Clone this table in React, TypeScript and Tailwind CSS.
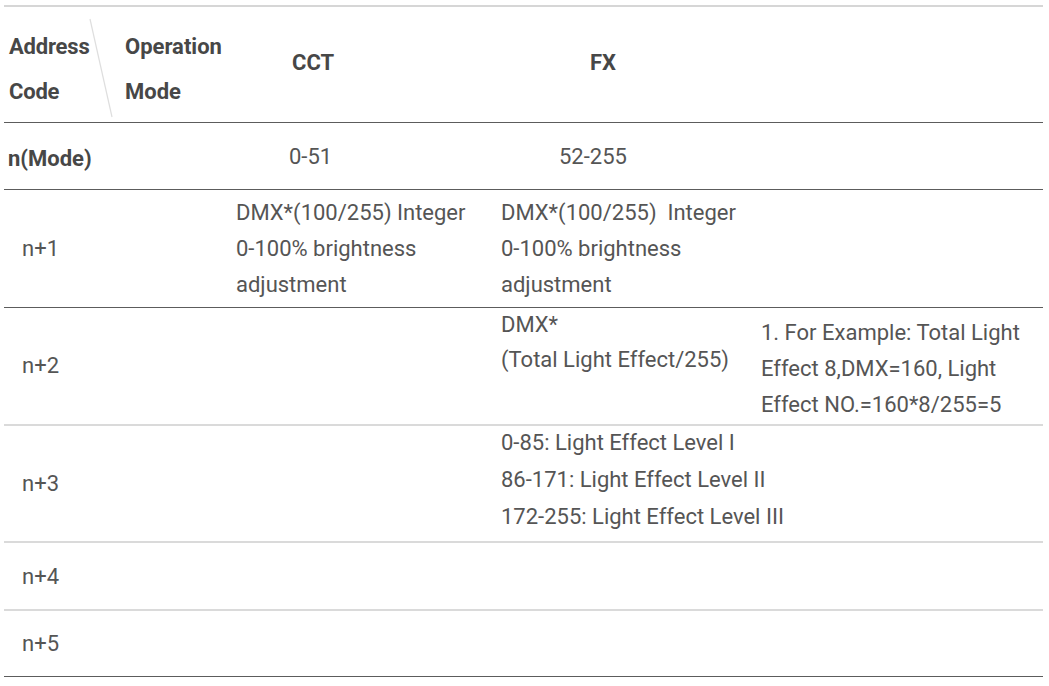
import React from 'react';

const font = { fontFamily: 'Roboto, "Noto Sans", "Liberation Sans", sans-serif' };

const cols = 'grid grid-cols-[106px_116px_264px_260px_1fr]';

export default function App() {
  return (
    <div className="w-[1049px] h-[686px] bg-white pt-[5px] pl-[4px] pr-[6px] text-[22px] text-[#555555]" style={font}>
      <div className="border-t-2 border-[#d6d6d6]">
        {/* header */}
        <div className={`${cols} relative h-[116px] border-b border-[#5c5c5c] items-center font-bold text-[#474747] leading-[45px]`}>
          <div className="pl-[5px] mt-[8px] tracking-[-0.2px]">
            <div>Address</div>
            <div>Code</div>
          </div>
          <div className="pl-[15px] mt-[8px]">
            <div>Operation</div>
            <div>Mode</div>
          </div>
          <div className="pl-[66px] -mt-[5px]">CCT</div>
          <div className="pl-[100px] -mt-[5px]">FX</div>
          <div />
          <svg className="absolute left-0 top-0" width="120" height="116" viewBox="0 0 120 116">
            <line x1="86" y1="12" x2="108" y2="110" stroke="#dedede" strokeWidth="1.2" />
          </svg>
        </div>

        {/* n(Mode) */}
        <div className={`${cols} h-[67px] border-b border-[#5c5c5c] items-center`}>
          <div className="pl-[4px] mt-[4px] font-bold text-[#474747] col-span-2">n(Mode)</div>
          <div className="pl-[63px]">0-51</div>
          <div className="pl-[69px]">52-255</div>
          <div />
        </div>

        {/* n+1 */}
        <div className={`${cols} h-[118px] border-b border-[#5c5c5c] items-center leading-[36px]`}>
          <div className="pl-[18px]">n+1</div>
          <div />
          <div className="pl-[10px]">
            <div>DMX*(100/255) Integer</div>
            <div>0-100% brightness</div>
            <div>adjustment</div>
          </div>
          <div className="pl-[11px]">
            <div>DMX*(100/255)&nbsp; Integer</div>
            <div>0-100% brightness</div>
            <div>adjustment</div>
          </div>
          <div />
        </div>

        {/* n+2 */}
        <div className={`${cols} h-[118px] border-b-2 border-[#dadada] items-center leading-[36px]`}>
          <div className="pl-[18px]">n+2</div>
          <div />
          <div />
          <div className="pl-[11px] self-start -mt-[1px] leading-[35px]">
            <div>DMX*</div>
            <div>(Total Light Effect/255)</div>
          </div>
          <div className="pl-[11px] mt-[6px]">
            <div>1. For Example: Total Light</div>
            <div>Effect 8,DMX=160, Light</div>
            <div>Effect NO.=160*8/255=5</div>
          </div>
        </div>

        {/* n+3 */}
        <div className={`${cols} h-[117px] border-b-2 border-[#dadada] items-center leading-[37px]`}>
          <div className="pl-[18px]">n+3</div>
          <div />
          <div />
          <div className="pl-[11px] col-span-2 -mt-[8px]">
            <div>0-85: Light Effect Level I</div>
            <div>86-171: Light Effect Level II</div>
            <div>172-255: Light Effect Level III</div>
          </div>
        </div>

        {/* n+4 */}
        <div className={`${cols} h-[68px] border-b-2 border-[#dadada] items-center`}>
          <div className="pl-[18px]">n+4</div>
        </div>

        {/* n+5 */}
        <div className={`${cols} h-[66px] border-b border-[#5c5c5c] items-center`}>
          <div className="pl-[18px]">n+5</div>
        </div>
      </div>
    </div>
  );
}
